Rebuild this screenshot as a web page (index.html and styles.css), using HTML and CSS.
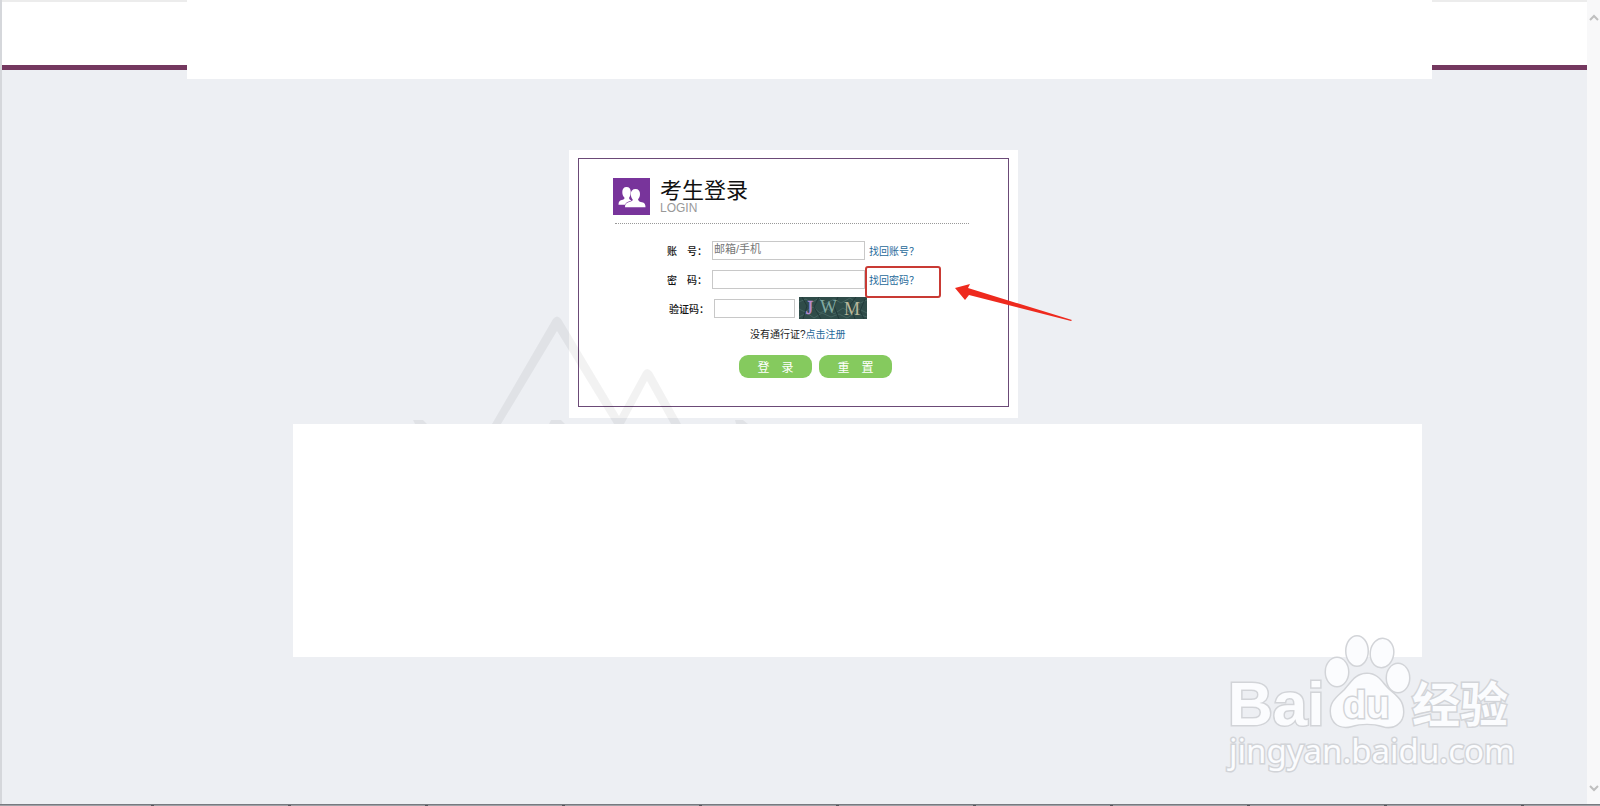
FILE: index.html
```html
<!DOCTYPE html>
<html lang="zh-CN">
<head>
    <meta charset="UTF-8">
    <meta name="viewport" content="width=device-width, initial-scale=1.0">
    <title>考生登录</title>
    <link rel="stylesheet" href="styles.css">
</head>
<body>
    <div class="window">
        <div class="page">
            <!-- Top banner -->
            <header class="header">
                <div class="header-left"></div>
                <div class="banner"></div>
                <div class="header-right"></div>
            </header>

            <main class="main">
                <!-- Login box -->
                <section class="card">
                    <div class="card-inner">
                        <div class="card-header">
                            <svg class="card-icon" viewBox="0 0 37 37" aria-hidden="true">
                                <rect width="37" height="37" fill="#78349b"/>
                                <path d="M22.500 11c3 0 4.500 2 4.500 5 0 2.500-1 4-2 5.500.5 1.800 2 2.300 4 2.800 2.500.6 3.500 1.700 3.500 5H12c0-3 1-4.200 3.500-5 2-.6 4-1 4.300-2.500-1.200-1.500-2-3.300-2-5.800 0-3 1.700-5 4.700-5z" fill="#fff"/>
                                <path d="M13.500 9c2.800 0 4.200 2 4.200 4.800 0 3-.7 4.700-1.700 6.200.4 1.600 1.500 2 2.500 2.500-3 1-5.500 1.500-6.500 4.300H5.500c0-3 1-4 3.200-4.700 1.800-.6 2.800-.8 2.800-2.300-1.500-1.500-2.200-3.300-2.200-5.800 0-3 1.400-5 4.200-5z" fill="#fff"/>
                            </svg>
                            <div class="card-heading">
                                <h1>考生登录</h1>
                                <p>LOGIN</p>
                            </div>
                        </div>

                        <form class="login-form">
                            <div class="form-row">
                                <label for="account">账&emsp;号：</label>
                                <input type="text" id="account" name="account" placeholder="邮箱/手机">
                                <a href="#">找回账号？</a>
                            </div>
                            <div class="form-row">
                                <label for="password">密&emsp;码：</label>
                                <input type="password" id="password" name="password">
                                <a href="#">找回密码？</a>
                            </div>
                            <div class="form-row captcha-row">
                                <label for="captcha">验证码：</label>
                                <input class="captcha-input" type="text" id="captcha" name="captcha">
                                <svg class="captcha" viewBox="0 0 68 22" role="img" aria-label="验证码图片">
                                    <rect width="68" height="22" fill="#2f4c49"/>
                                    <path d="M0 5l7-3 5 4 8-5 6 6 9-5 7 4 9-5 8 6 9-4M0 12l6 3 8-5 7 6 8-4 6 5 9-6 8 5 8-4 8 4M0 20l8-4 7 5 8-5 9 4 8-3 8 4 8-5 12 4" fill="none" stroke="#446460"/>
                                    <path d="M3 0l5 9-4 13M20 0l-5 10 7 12M39 0l-4 9 5 13M57 0l-6 8 5 14M66 2l-5 12 4 8" fill="none" stroke="#223a3a"/>
                                    <text class="captcha-text" x="7" y="17" fill="#b98ad0" stroke="#b98ad0" stroke-width=".5">J</text>
                                    <text class="captcha-text" x="21" y="16" fill="#83aaa2">W</text>
                                    <text class="captcha-text" x="45" y="18" fill="#b9b79a">M</text>
                                </svg>
                            </div>
                            <p class="register">没有通行证?<a href="#">点击注册</a></p>
                            <div class="button-container">
                                <button type="submit">登&emsp;录</button>
                                <button type="reset">重&emsp;置</button>
                            </div>
                        </form>
                    </div>

                    <!-- Mark around the password link -->
                    <div class="highlight"></div>
                    <svg class="arrow" viewBox="0 0 118 38" aria-hidden="true">
                        <path d="M1 5L16 1l-2 4 104 32-1 1L15 12l-4 5z" fill="#ee2a1e"/>
                    </svg>
                    <svg class="mountain" viewBox="0 0 340 110" aria-hidden="true">
                        <path d="M82 110L143 5q4-5 8 0l58 97 24-44q4-6 9 0l29 52h-10l-24-43-23 43h-10L147 17 91 110zM3 106h10l4 4H5zM141 106h10l4 4h-16zM325 106h8l5 4h-12z" fill="#000" fill-opacity=".05"/>
                    </svg>
                </section>

                <section class="panel"></section>
            </main>

            <!-- Site watermark -->
            <svg class="watermark" viewBox="0 0 300 150" role="img" aria-label="Baidu 经验">
                <g class="mark">
                    <text class="mark-bai" x="4" y="93">Bai</text>
                    <ellipse cx="113" cy="40" rx="11" ry="14"/>
                    <ellipse cx="133" cy="19" rx="10.500" ry="14.500"/>
                    <ellipse cx="158" cy="21" rx="11" ry="14" transform="rotate(8 158 21)"/>
                    <ellipse cx="174" cy="46" rx="11" ry="14"/>
                    <path d="M143 42c12 0 15 10 22 16 8 7 14 11 14 22 0 12-11 17-20 14-10-3-22-3-32 0-11 3-20-3-20-15 0-10 7-14 14-21 7-8 11-16 22-16z"/>
                    <text class="mark-du" x="119" y="86">du</text>
                    <text class="mark-cn" x="188" y="90">经验</text>
                    <text class="mark-url" x="5" y="131">jingyan.baidu.com</text>
                </g>
            </svg>
        </div>

        <!-- Scroll strip -->
        <div class="scroll-strip" aria-hidden="true">
            <svg viewBox="0 0 10 8"><path d="M1 6l4-4 4 4" fill="none" stroke="#bfbfbf" stroke-width="2"/></svg>
            <svg viewBox="0 0 10 8"><path d="M1 2l4 4 4-4" fill="none" stroke="#bfbfbf" stroke-width="2"/></svg>
        </div>
    </div>
    <div class="taskbar"></div>
</body>
</html>
```
FILE: styles.css
```css
* {
    box-sizing: border-box;
}

body {
    display: flex;
    flex-direction: column;
    min-height: 100vh;
    margin: 0;
    font-family: "Liberation Sans", "Noto Sans CJK SC", sans-serif;
    font-size: 10px;
    color: #222;
    background-color: #edeff3;
}

h1,
p {
    margin: 0;
}

a {
    color: #1f6a9a;
    text-decoration: none;
}

.window {
    display: flex;
    flex: 1;
}

.page {
    position: relative;
    flex: 1;
    border-left: 2px solid #d5d7db;
}

/* Header: white banner between two purple lines */
.header {
    display: flex;
    align-items: flex-start;
}

.header-left,
.header-right {
    height: 70px;
    background-color: white;
    border-top: 2px solid #ececec;
    border-bottom: 5px solid #74385f;
}

.header-left {
    width: 185px;
}

.header-right {
    width: 155px;
}

.banner {
    flex: 1;
    height: 79px;
    background-color: white;
}

.main {
    padding-right: 2px;
}

/* Login box */
.card {
    position: relative;
    width: 449px;
    margin: 71px auto 6px;
    padding: 8px 9px 11px;
    background-color: white;
}

.card-inner {
    padding: 19px 34px 28px;
    border: 1px solid #6b4a77;
}

.card-header {
    display: flex;
    gap: 10px;
}

.card-icon {
    width: 37px;
    height: 37px;
}

.card-heading h1 {
    padding-top: 2px;
    font-size: 22px;
    font-weight: normal;
    line-height: 22px;
    color: #111;
}

.card-heading p {
    font-size: 12px;
    line-height: 12px;
    color: #999;
}

.login-form {
    margin: 8px 5px 0 2px;
    padding: 15px 0 0 52px;
    border-top: 1px dotted #999;
}

.form-row {
    display: flex;
    align-items: center;
    gap: 4px;
    height: 22px;
    margin-bottom: 7px;
}

.captcha-row {
    padding-left: 2px;
}

.form-row label,
.form-row a {
    font-family: "Noto Sans CJK TC", sans-serif;
    white-space: nowrap;
}

.form-row label {
    width: 41px;
    font-weight: 500;
    color: #111;
}

.form-row input {
    width: 153px;
    height: 19px;
    padding: 0 1px 2px;
    border: 1px solid #c8c8c8;
    font-family: inherit;
    font-size: 11px;
}

.form-row .captcha-input {
    width: 81px;
}

.form-row input::placeholder {
    color: #777;
}

.captcha {
    width: 68px;
    height: 22px;
}

.captcha-text {
    font-family: "Liberation Serif", serif;
    font-size: 18px;
}

.register {
    padding: 2px 0 0 83px;
    line-height: 14px;
}

/* Login and reset buttons */
.button-container {
    display: flex;
    gap: 7px;
    margin-top: 13px;
    padding-left: 72px;
}

button {
    width: 73px;
    height: 23px;
    padding: 0;
    border: none;
    border-radius: 9px;
    background-color: #85ca5e;
    color: white;
    font-family: inherit;
    font-size: 12px;
    cursor: pointer;
}

/* Marks drawn over the box */
.highlight {
    position: absolute;
    top: 116px;
    left: 296px;
    width: 76px;
    height: 32px;
    border: 2px solid #c93a34;
    border-radius: 3px;
    pointer-events: none;
}

.arrow {
    position: absolute;
    top: 133px;
    left: 385px;
    width: 118px;
    height: 38px;
    pointer-events: none;
}

.mountain {
    position: absolute;
    top: 164px;
    left: -159px;
    width: 340px;
    height: 110px;
    pointer-events: none;
}

.panel {
    height: 233px;
    margin: 0 163px 0 291px;
    background-color: white;
}

/* Watermark in the corner */
.watermark {
    position: absolute;
    right: 63px;
    bottom: 22px;
    width: 300px;
    height: 150px;
    pointer-events: none;
}

.mark {
    fill: #fbfcfe;
    stroke: #d2d4d8;
    stroke-width: 3px;
    paint-order: stroke;
}

.mark-bai {
    font-size: 62px;
    font-weight: bold;
}

.mark-du {
    font-size: 38px;
    font-weight: bold;
}

.mark-cn {
    font-family: "Noto Sans CJK SC", sans-serif;
    font-size: 48px;
    font-weight: bold;
}

.mark-url {
    font-family: "Noto Sans", sans-serif;
    font-size: 33px;
}

.scroll-strip {
    display: flex;
    flex-direction: column;
    justify-content: space-between;
    align-items: flex-end;
    width: 13px;
    padding: 14px 1px 12px;
    background-color: #f8f8f9;
}

.scroll-strip svg {
    width: 10px;
    height: 8px;
}

/* Top edge of the taskbar, with a notch between its buttons */
.taskbar {
    height: 2px;
    border-top: 1px solid #777a80;
    background: repeating-linear-gradient(to right, #9fa1a6 0, #9fa1a6 134px, #55585e 134px, #55585e 137px) 17px 0;
}
```
